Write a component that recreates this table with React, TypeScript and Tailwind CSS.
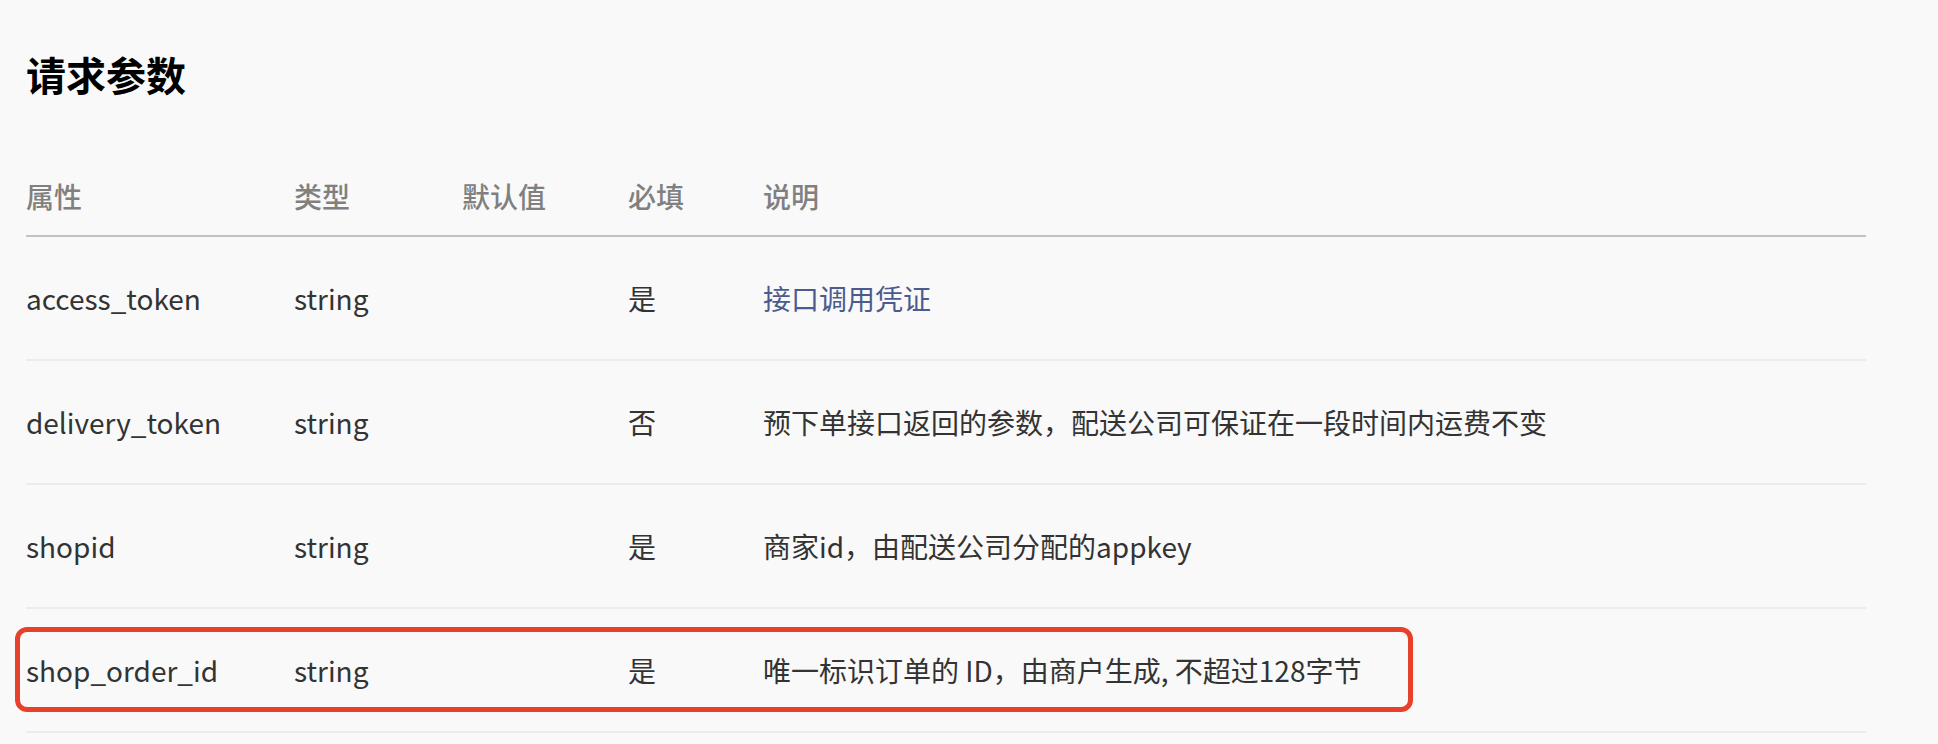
import React from 'react';

interface Param {
  name: string;
  type: string;
  def: string;
  required: string;
  desc: string;
  link?: boolean;
  marked?: boolean;
}

const params: Param[] = [
  { name: 'access_token', type: 'string', def: '', required: '是', desc: '接口调用凭证', link: true },
  { name: 'delivery_token', type: 'string', def: '', required: '否', desc: '预下单接口返回的参数，配送公司可保证在一段时间内运费不变' },
  { name: 'shopid', type: 'string', def: '', required: '是', desc: '商家id，由配送公司分配的appkey' },
  { name: 'shop_order_id', type: 'string', def: '', required: '是', desc: '唯一标识订单的 ID，由商户生成, 不超过128字节', marked: true },
];

const cols = 'grid grid-cols-[268px_168px_166px_135px_1fr]';

export default function App() {
  return (
    <div
      className="min-h-[744px] bg-[#f9f9f9] pl-[26px] pr-[72px] pt-[50px]"
      style={{ fontFamily: '"Noto Sans CJK SC", "Noto Sans", sans-serif' }}
    >
      <h2 className="text-[40px] font-bold leading-[48px] text-black">请求参数</h2>

      <div className="mt-[59px] w-[1840px]">
        <div className={`${cols} h-[80px] items-center border-b-2 border-[#c2c2c2] text-[28px] font-medium text-[#808080]`}>
          <div>属性</div>
          <div>类型</div>
          <div>默认值</div>
          <div>必填</div>
          <div>说明</div>
        </div>

        {params.map((p) => (
          <div
            key={p.name}
            className={`${cols} relative h-[124px] items-center border-b-2 border-[#ececec] text-[28px] text-[#333333]`}
          >
            <div>{p.name}</div>
            <div>{p.type}</div>
            <div>{p.def}</div>
            <div>{p.required}</div>
            <div className={p.link ? 'text-[#4b5b8e]' : ''}>{p.desc}</div>
            {p.marked && (
              <div className="pointer-events-none absolute left-[-11px] top-[18px] h-[85px] w-[1398px] rounded-[12px] border-[5px] border-[#e8412b]" />
            )}
          </div>
        ))}
      </div>
    </div>
  );
}
